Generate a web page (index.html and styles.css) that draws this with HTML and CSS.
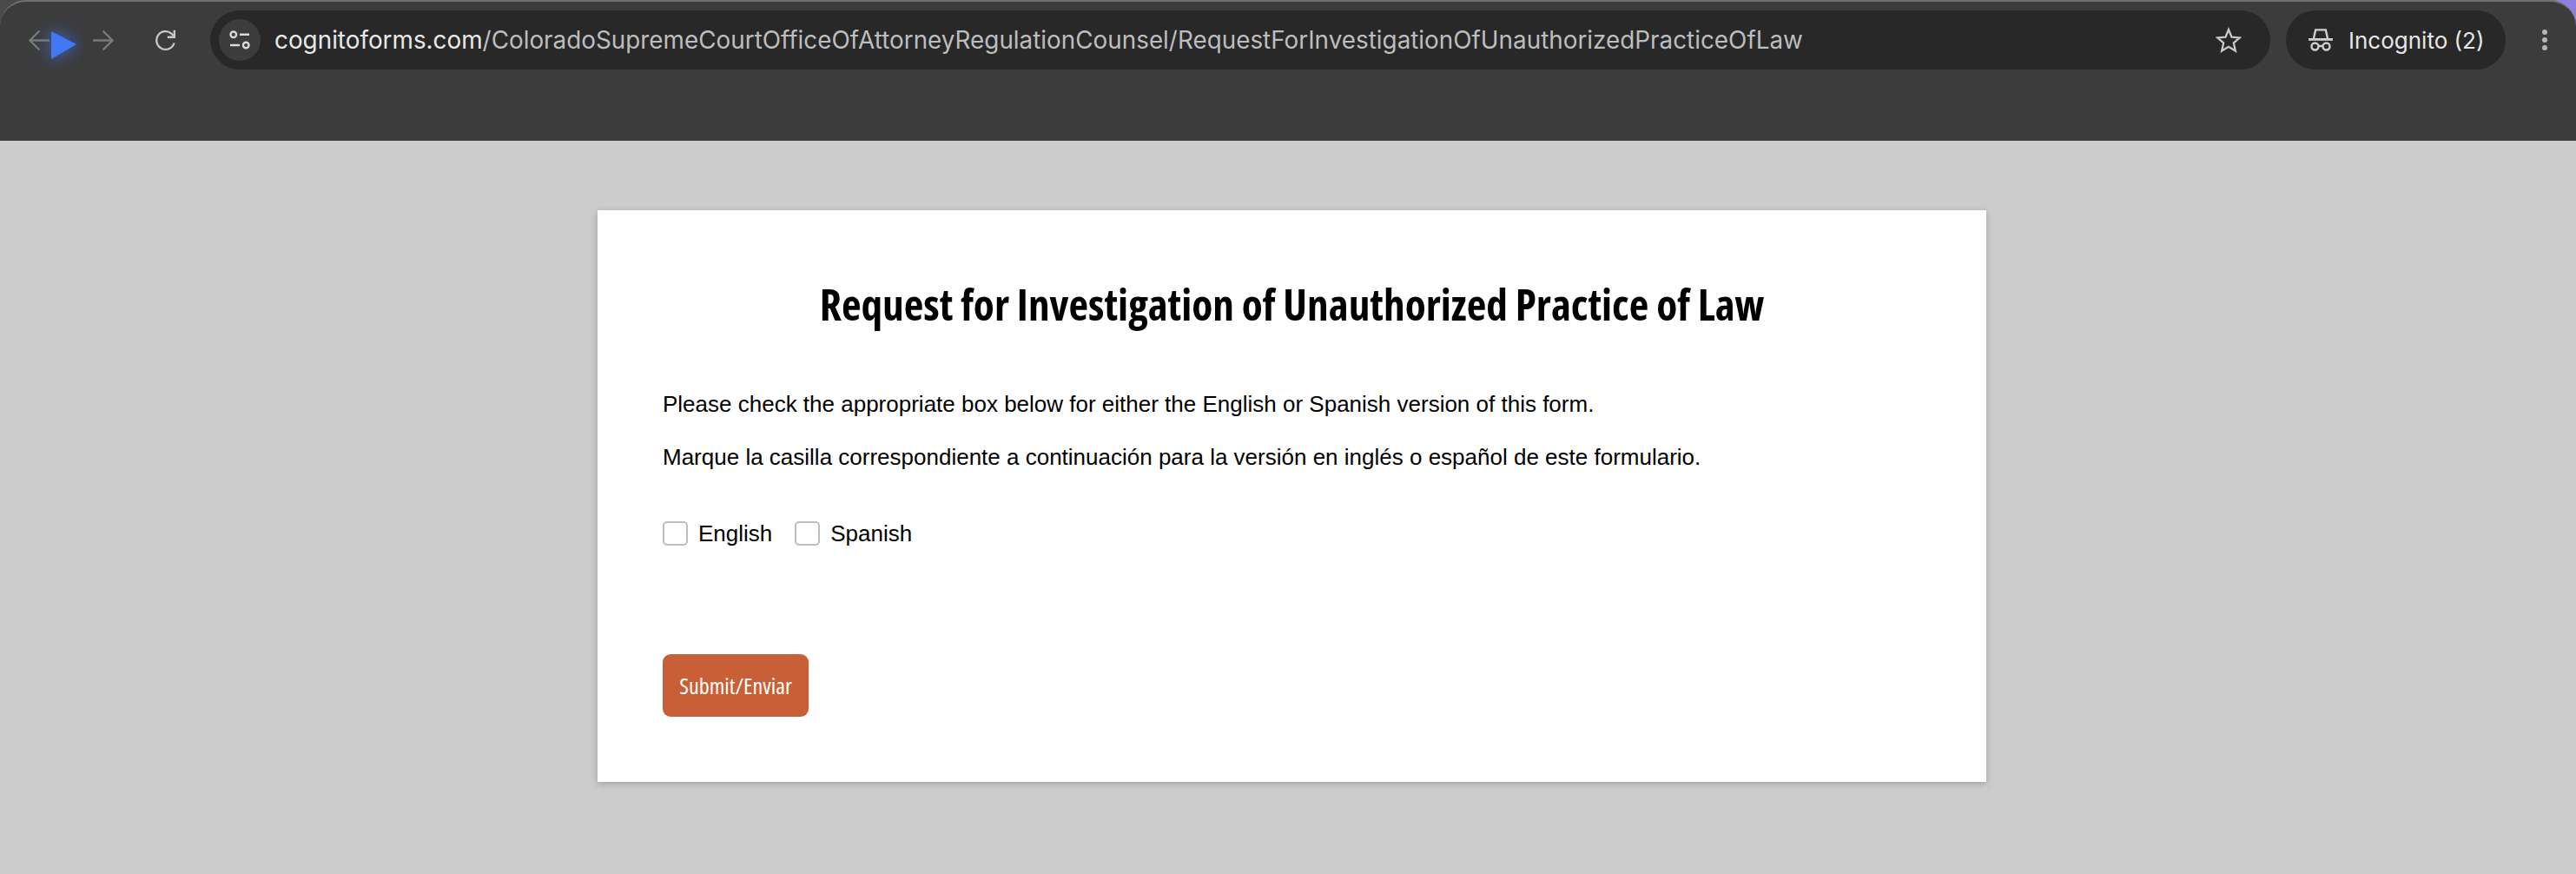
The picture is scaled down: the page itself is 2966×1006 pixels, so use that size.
FILE: index.html
```html
<!DOCTYPE html>
<html lang="en">
<head>
<meta charset="utf-8">
<title>Request for Investigation of Unauthorized Practice of Law</title>
<link rel="stylesheet" href="styles.css">
</head>
<body>
<div class="desktop">
<header class="browser">
  <div class="nav">
    <svg class="ico back" viewBox="0 0 25 25"><path d="M24 12.5H2M12.5 1.5 1.5 12.5l11 11"/></svg>
    <svg class="ico forward" viewBox="0 0 25 25"><path d="M1 12.5h22M12.5 1.5l11 11-11 11"/></svg>
    <svg class="ico reload" viewBox="0 0 25 25"><path d="M22.6 15.5A10.4 10.4 0 1 1 19.4 4.6L22.5 7.6"/><path class="solid" d="M21.6 0.8h2.4v9.2h-9.2V7.6h6.8z"/></svg>
  </div>
  <div class="omnibox">
    <span class="tune">
      <svg viewBox="0 0 24 22"><circle cx="4.8" cy="4.8" r="3.3"/><path d="M12 4.8h11M1 17h11"/><circle cx="19.2" cy="17" r="3.3"/></svg>
    </span>
    <span class="url"><span class="host">cognitoforms.com</span>/ColoradoSupremeCourtOfficeOfAttorneyRegulationCounsel/RequestForInvestigationOfUnauthorizedPracticeOfLaw</span>
    <svg class="star" viewBox="0 0 30 30"><path d="M15 3l3.5 8.6 9.3.8-7 6.1 2.1 9.1-7.9-4.8-7.9 4.8 2.1-9.1-7-6.1 9.3-.8z"/></svg>
  </div>
  <div class="profile">
    <svg class="spy" viewBox="0 0 28 26"><path class="solid" d="M0 11h28v2.8H0z"/><path d="M6 11 8.2 1.4h11.6L22 11"/><circle cx="7.5" cy="20.5" r="4"/><circle cx="20.5" cy="20.5" r="4"/><path d="M11.5 20h5"/></svg>
    <span>Incognito (2)</span>
  </div>
  <div class="kebab"><i></i><i></i><i></i></div>
  <svg class="pointer" viewBox="0 0 29 32"><path d="M0 0v32L29 15z"/></svg>
</header>
<main class="page">
  <form class="card">
    <h1>Request for Investigation of Unauthorized Practice of Law</h1>
    <p class="first">Please check the appropriate box below for either the English or Spanish version of this form.</p>
    <p class="second">Marque la casilla correspondiente a continuación para la versión en inglés o español de este formulario.</p>
    <div class="choices">
      <label class="choice"><span class="box"></span>English</label>
      <label class="choice"><span class="box"></span>Spanish</label>
    </div>
    <button class="submit" type="button">Submit/Enviar</button>
  </form>
</main>
</div>
</body>
</html>
```
FILE: styles.css
```css
* { box-sizing: border-box; }
html, body { margin: 0; height: 100%; }
body {
  background: #ccc;
  font-family: "Liberation Sans", Arial, sans-serif;
  overflow: hidden;
}
.desktop {
  background: linear-gradient(90deg, #4a4a4a 50%, #8f7fe0 50%) top / 100% 40px no-repeat;
}
.browser {
  position: relative;
  height: 162px;
  background: #3c3c3c;
  border-top: 2px solid #6f6f6f;
  border-radius: 30px 30px 0 0;
  display: flex;
  align-items: flex-start;
  padding: 10px 0 0 33px;
  color: #e6e6e6;
  font-family: Inter, "Noto Sans", sans-serif;
}
.nav {
  display: flex;
  align-items: center;
  height: 68px;
  width: 209px;
  flex: none;
}
.ico { fill: none; stroke-width: 2.3; width: 25px; height: 25px; flex: none; }
.ico.back, .ico.forward { stroke: #7a7a7a; }
.ico.forward { margin-left: 48px; }
.ico.reload { stroke: #c9c9c9; margin-left: 47px; }
.ico .solid { fill: #c9c9c9; stroke: none; }
.omnibox {
  width: 2372px;
  height: 68px;
  flex: none;
  background: #282828;
  border-radius: 34px;
  display: flex;
  align-items: center;
  padding: 0 33px 0 10px;
}
.tune {
  width: 48px;
  height: 48px;
  border-radius: 50%;
  background: #3c3c3c;
  display: flex;
  align-items: center;
  justify-content: center;
  flex: none;
}
.tune svg { width: 24px; height: 22px; fill: none; stroke: #d8d8d8; stroke-width: 2.4; }
.url {
  margin-left: 16px;
  flex: 1;
  font-size: 27.85px;
  color: #bdbdbd;
  white-space: nowrap;
}
.host { color: #e8e8e8; }
.star { width: 30px; height: 30px; fill: none; stroke: #c8c8c8; stroke-width: 2.3; flex: none; }
.profile {
  margin-left: 18px;
  width: 253px;
  height: 68px;
  flex: none;
  background: #282828;
  border-radius: 34px;
  display: flex;
  align-items: center;
  gap: 18px;
  padding-left: 26px;
  font-size: 26px;
  color: #e6e6e6;
  white-space: nowrap;
}
.spy { width: 28px; height: 26px; fill: none; stroke: #cfcfcf; stroke-width: 2.4; flex: none; }
.spy .solid { fill: #cfcfcf; stroke: none; }
.kebab {
  margin-left: 42px;
  height: 68px;
  display: flex;
  flex-direction: column;
  justify-content: center;
  gap: 3px;
}
.kebab i { display: block; width: 6px; height: 6px; border-radius: 50%; background: #b5b5b5; }
.pointer {
  position: absolute;
  left: 59px;
  top: 34px;
  width: 29px;
  height: 32px;
  fill: #4278f5;
  overflow: visible;
  filter: drop-shadow(0 0 8px rgba(66, 120, 245, .6)) drop-shadow(0 0 14px rgba(66, 120, 245, .3));
}
.page {
  padding: 80px 0 0 688px;
}
.card {
  width: 1599px;
  height: 658px;
  background: #fff;
  box-shadow: 0 2px 8px rgba(0, 0, 0, .22);
  padding: 73px 75px 0;
  color: #000;
}
h1 {
  margin: 0;
  text-align: center;
  font-family: "Open Sans", sans-serif;
  font-stretch: 75%;
  font-weight: 700;
  font-size: 49.3px;
  line-height: 70px;
}
p { margin: 0; font-size: 26px; line-height: 40px; }
.first { margin-top: 60px; }
.second { margin-top: 21px; }
.choices {
  display: flex;
  gap: 26px;
  margin-top: 52px;
  font-size: 26px;
  line-height: 32px;
}
.choice { display: flex; align-items: center; }
.box {
  width: 29px;
  height: 28px;
  margin-right: 12px;
  border: 2px solid #bdbdbd;
  border-radius: 5px;
  background: #fff;
}
.submit {
  display: block;
  margin-top: 123px;
  width: 168px;
  height: 72px;
  border: 0;
  border-radius: 9px;
  background: #c95f36;
  color: #fff;
  padding: 0;
  font-family: "Open Sans", sans-serif;
  font-stretch: 75%;
  font-weight: 400;
  font-size: 26.2px;
}
```
